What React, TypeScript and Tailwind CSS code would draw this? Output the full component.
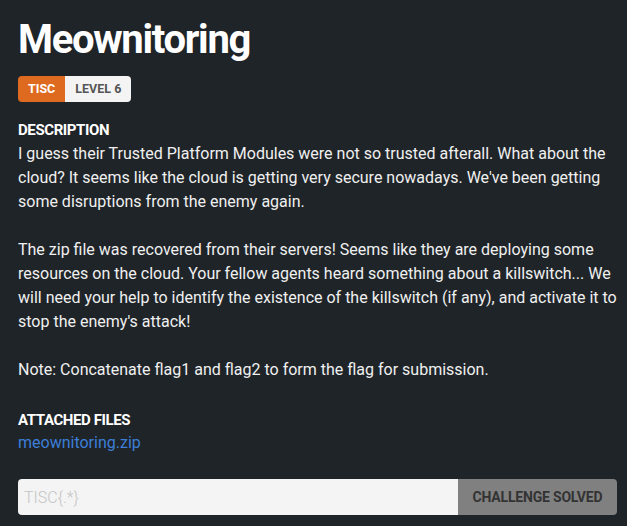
export default function App() {
  const head = { fontFamily: "Roboto, 'Liberation Sans', sans-serif" }
  return (
    <div className="min-h-[526px] w-full bg-[#1f2428] px-[18px] pt-[16px] text-white" style={{ fontFamily: "Roboto, 'Liberation Sans', sans-serif" }}>
      <h1 className="text-[40px] font-bold leading-[48px] tracking-[-1.3px]" style={head}>Meownitoring</h1>
      <div className="mt-[12px] flex">
        <div className="flex h-[26px] overflow-hidden rounded-[4px] text-[12.5px] font-bold" style={head}>
          <span className="flex items-center bg-[#de6a20] px-[10px] text-white">TISC</span>
          <span className="flex items-center bg-[#f4f4f4] px-[10px] text-[#555]">LEVEL 6</span>
        </div>
      </div>
      <h3 className="mt-[18px] text-[15px] font-bold leading-[20px] tracking-[-0.4px]" style={head}>DESCRIPTION</h3>
      <div className="mt-[2px] w-[599px] text-[16px] leading-[24px] text-[#f0f0f0]">
        <p>I guess their Trusted Platform Modules were not so trusted afterall. What about the cloud? It seems like the cloud is getting very secure nowadays. We've been getting some disruptions from the enemy again.</p>
        <p className="mt-[24px]">The zip file was recovered from their servers! Seems like they are deploying some resources on the cloud. Your fellow agents heard something about a killswitch... We will need your help to identify the existence of the killswitch (if any), and activate it to stop the enemy's attack!</p>
        <p className="mt-[24px]">Note: Concatenate flag1 and flag2 to form the flag for submission.</p>
      </div>
      <h3 className="mt-[28px] text-[15px] font-bold leading-[20px] tracking-[-0.4px]" style={head}>ATTACHED FILES</h3>
      <a className="mt-[1px] block text-[16px] leading-[24px] text-[#3c7fd9]" href="#">meownitoring.zip</a>
      <div className="mt-[24px] flex h-[36px] w-[599px] overflow-hidden rounded-[4px]">
        <input className="h-full flex-1 bg-[#f4f4f4] px-[6px] text-[16px] font-light text-[#333] outline-none placeholder:text-[#c4c4c4]" placeholder="TISC{.*}" />
        <button className="flex h-full w-[159px] items-center justify-center bg-[#808080] text-[14px] font-bold tracking-[-0.2px] text-[#333]" style={head}>CHALLENGE SOLVED</button>
      </div>
    </div>
  )
}
